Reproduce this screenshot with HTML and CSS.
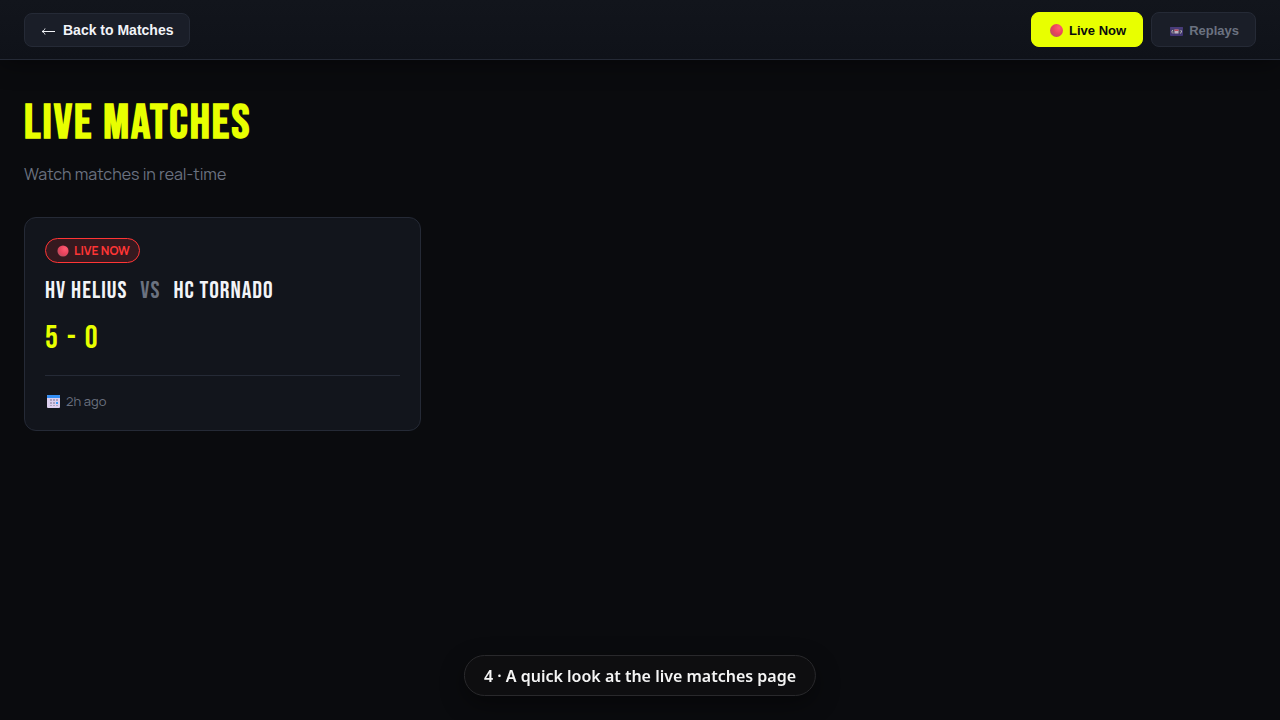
FILE: index.html
```html
<!DOCTYPE html>
<html lang="en">
  <head>
    <meta charset="UTF-8" />
    <meta name="viewport" content="width=device-width, initial-scale=1.0" />
    <title>Live Matches</title>
    <link rel="stylesheet" href="styles.css">
  </head>
  <body>
    <header class="top-bar">
      <button type="button" class="btn btn-back">
        <svg class="arrow" viewBox="0 0 14 10" aria-hidden="true">
          <path d="M14 6.500H1M4 3.500C3.500 5 2.500 6 1 6.500C2.500 7 3.500 8 4 9.500" />
        </svg>
        Back to Matches
      </button>

      <nav class="tabs">
        <button type="button" class="btn btn-tab active">
          <svg class="icon" viewBox="0 0 14 14" aria-hidden="true">
            <defs>
              <radialGradient id="ball" cx="0.7" cy="0.3" r="0.8">
                <stop offset="0" stop-color="#ff5c72" />
                <stop offset="0.6" stop-color="#e8425c" />
                <stop offset="1" stop-color="#b85060" />
              </radialGradient>
            </defs>
            <circle cx="6.5" cy="6.5" r="6.5" fill="url(#ball)" />
          </svg>
          Live Now
        </button>
        <button type="button" class="btn btn-tab">
          <svg class="icon icon-muted" viewBox="0 0 14 14" aria-hidden="true">
            <rect x="0" y="3" width="13" height="9" rx="1" fill="#4a3a86" />
            <rect x="0" y="3" width="13" height="2" rx="1" fill="#54448f" />
            <rect x="1" y="5.5" width="11" height="4" rx="1" fill="#5d5670" />
            <path d="M2 6h1v1H2zM1.500 7h1v1.500h-1zM2.500 8.500h1v1h-1zM10.500 6h1v1h-1zM11 7h1v1.500h-1zM10 8.500h1v1h-1z" fill="#d8d0e4" />
            <rect x="4.500" y="5.5" width="4" height="4" fill="#e4d6e6" />
            <rect x="4.500" y="5.5" width="4" height="1.5" fill="#e8576c" />
          </svg>
          Replays
        </button>
      </nav>
    </header>

    <main class="content">
      <h1>LIVE MATCHES</h1>
      <p class="subtitle">Watch matches in real-time</p>

      <div class="matches-grid">
        <article class="match-card">
          <span class="live-badge">
            <svg class="icon icon-small" viewBox="0 0 14 14" aria-hidden="true">
              <circle cx="7" cy="7" r="6.5" fill="url(#ball)" />
            </svg>
            LIVE NOW
          </span>
          <h2 class="teams">
            <span>HV HELIUS</span>
            <span class="vs">VS</span>
            <span>HC TORNADO</span>
          </h2>
          <div class="score">5 - 0</div>
          <div class="match-meta">
            <svg class="icon" viewBox="0 0 14 14" aria-hidden="true">
              <rect x="0" y="1" width="13" height="13" rx="1" fill="#dccfee" />
              <path d="M1 1h11a1 1 0 0 1 1 1V4H0V2a1 1 0 0 1 1-1z" fill="#348ff5" />
              <path d="M3 5h2v2H3zM6 5h2v2H6zM9 5h2v2H9zM3 8h2v2H3zM6 8h2v2H6zM3 11h2v1H3zM6 11h2v1H6zM9 11h2v1H9z" fill="#aaa0be" />
              <path d="M9 8h2v2H9z" fill="#3d9bf5" />
            </svg>
            2h ago
          </div>
        </article>
      </div>
    </main>

    <div class="toast" role="status">4 · A quick look at the live matches page</div>
  </body>
</html>
```
FILE: styles.css
```css
* {
  margin: 0;
  padding: 0;
  box-sizing: border-box;
}

:root {
  --accent: #e8ff00;
  --panel: #12151c;
  --raised: #1a1e28;
  --line: #252a36;
  --muted: #6b7280;
  --live: #ff3535;
  --display: 'Bebas Neue', 'Liberation Sans Narrow', 'Roboto Condensed', 'Roboto', sans-serif;
}

body {
  min-height: 100vh;
  background: #0a0b0e;
  color: #f2f4f8;
  font-family: 'Manrope', 'Inter', sans-serif;
}

.top-bar {
  display: flex;
  justify-content: space-between;
  align-items: center;
  padding: 12px 24px;
  background: linear-gradient(180deg, #12151c, #0f1219);
  border-bottom: 1px solid var(--line);
  box-shadow: 0 4px 24px rgba(0, 0, 0, 0.4);
}

.tabs {
  display: flex;
  gap: 8px;
}

.btn {
  display: flex;
  align-items: center;
  height: 35px;
  padding: 0 16px;
  background: var(--raised);
  border: 1px solid var(--line);
  border-radius: 8px;
  color: #f2f4f8;
  font-family: 'Liberation Sans', Arial, sans-serif;
  font-size: 14px;
  font-weight: 700;
  cursor: pointer;
}

.btn-back {
  gap: 8px;
  height: 34px;
}

.btn-tab {
  gap: 5px;
  padding: 2px 16px 0 18px;
  color: var(--muted);
  font-size: 13px;
}

.btn-tab.active {
  background: var(--accent);
  border-color: var(--accent);
  color: #0a0b0e;
}

.arrow {
  width: 14px;
  height: 10px;
  fill: none;
  stroke: currentColor;
  stroke-width: 1;
}

.icon {
  width: 14px;
  height: 14px;
  flex-shrink: 0;
}

.icon-small {
  width: 12px;
  height: 12px;
}

.icon-muted {
  opacity: 0.8;
}

.content {
  padding: 32px 24px;
}

h1 {
  color: var(--accent);
  font-family: var(--display);
  font-size: 48px;
  font-weight: 700;
  letter-spacing: 2px;
  line-height: 64px;
}

.subtitle {
  margin: 6px 0 31px;
  color: var(--muted);
  font-size: 16px;
  line-height: 24px;
}

.matches-grid {
  display: grid;
  grid-template-columns: repeat(auto-fill, minmax(350px, 1fr));
  gap: 20px;
}

.match-card {
  padding: 20px;
  background: var(--panel);
  border: 1px solid var(--line);
  border-radius: 12px;
}

.live-badge {
  display: inline-flex;
  align-items: center;
  gap: 5px;
  height: 25px;
  padding: 0 9px 0 11px;
  background: rgba(255, 53, 53, 0.15);
  border: 1px solid var(--live);
  border-radius: 20px;
  color: var(--live);
  font-size: 12px;
  font-weight: 700;
  vertical-align: top;
}

.teams {
  display: flex;
  gap: 13px;
  margin-top: 13px;
  font-family: var(--display);
  font-size: 24px;
  font-weight: 400;
  letter-spacing: 1px;
  line-height: 30px;
}

.vs {
  color: var(--muted);
}

.score {
  margin-top: 13px;
  color: var(--accent);
  font-family: var(--display);
  font-size: 32px;
  font-weight: 400;
  letter-spacing: 2px;
  line-height: 40px;
}

.match-meta {
  display: flex;
  align-items: center;
  gap: 5px;
  margin-top: 16px;
  padding: 16px 2px 0;
  border-top: 1px solid var(--line);
  color: var(--muted);
  font-size: 13px;
  line-height: 18px;
}

.toast {
  position: fixed;
  bottom: 24px;
  left: 50%;
  transform: translateX(-50%);
  padding: 9px 19px 7px;
  background: #0e0e10;
  border: 1px solid #29292c;
  border-radius: 999px;
  box-shadow: 0 8px 24px rgba(0, 0, 0, 0.4);
  color: #f5f5f5;
  font-family: 'Segoe UI', 'Noto Sans', sans-serif;
  font-size: 16px;
  font-weight: 600;
  line-height: 23px;
  white-space: nowrap;
}
```
